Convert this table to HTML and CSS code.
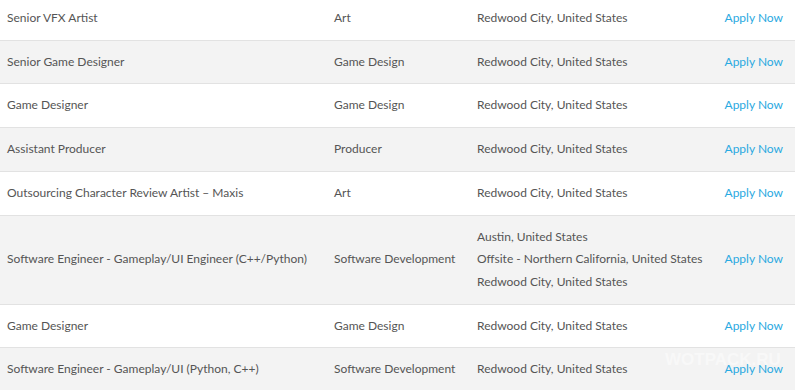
FILE: index.html
```html
<!DOCTYPE html>
<html>
<head>
<meta charset="utf-8">
<link rel="stylesheet" href="styles.css">
</head>
<body>
<div class="jobs">
  <div class="row">
    <div class="title">Senior VFX Artist</div>
    <div class="cat">Art</div>
    <div class="loc"><span>Redwood City, United States</span></div>
    <a class="apply">Apply Now</a>
  </div>
  <div class="row alt">
    <div class="title">Senior Game Designer</div>
    <div class="cat">Game Design</div>
    <div class="loc"><span>Redwood City, United States</span></div>
    <a class="apply">Apply Now</a>
  </div>
  <div class="row">
    <div class="title">Game Designer</div>
    <div class="cat">Game Design</div>
    <div class="loc"><span>Redwood City, United States</span></div>
    <a class="apply">Apply Now</a>
  </div>
  <div class="row alt">
    <div class="title">Assistant Producer</div>
    <div class="cat">Producer</div>
    <div class="loc"><span>Redwood City, United States</span></div>
    <a class="apply">Apply Now</a>
  </div>
  <div class="row">
    <div class="title">Outsourcing Character Review Artist – Maxis</div>
    <div class="cat">Art</div>
    <div class="loc"><span>Redwood City, United States</span></div>
    <a class="apply">Apply Now</a>
  </div>
  <div class="row alt">
    <div class="title">Software Engineer - Gameplay/UI Engineer (C++/Python)</div>
    <div class="cat">Software Development</div>
    <div class="loc"><span>Austin, United States</span><span>Offsite - Northern California, United States</span><span>Redwood City, United States</span></div>
    <a class="apply">Apply Now</a>
  </div>
  <div class="row">
    <div class="title">Game Designer</div>
    <div class="cat">Game Design</div>
    <div class="loc"><span>Redwood City, United States</span></div>
    <a class="apply">Apply Now</a>
  </div>
  <div class="row alt">
    <div class="title">Software Engineer - Gameplay/UI (Python, C++)</div>
    <div class="cat">Software Development</div>
    <div class="loc"><span>Redwood City, United States</span></div>
    <a class="apply">Apply Now</a>
    <div class="watermark">WOTPACK.RU</div>
  </div>
</div>
</body>
</html>
```

FILE: styles.css
```css
html, body {
  margin: 0;
  padding: 0;
  background: #ffffff;
  overflow: hidden;
}
body {
  font-family: "Lato", "Liberation Sans", sans-serif;
  font-size: 12px;
  color: #555555;
}
.jobs {
  width: 795px;
  margin-top: -3px;
}
.row {
  position: relative;
  display: grid;
  grid-template-columns: 327px 143px 1fr auto;
  align-items: center;
  padding: 10px 11px 10px 7px;
  border-bottom: 1px solid #e2e2e2;
  background: #ffffff;
  white-space: nowrap;
}
.row.alt {
  background: #f3f3f3;
}
.title, .cat, .loc span, .apply {
  line-height: 22.7px;
}
.loc {
  display: flex;
  flex-direction: column;
}
.apply {
  color: #2aa9e1;
  text-align: right;
  margin-right: 1px;
}
.watermark {
  position: absolute;
  left: 665px;
  top: 2px;
  font-family: "Liberation Sans Narrow", "Liberation Sans", sans-serif;
  font-size: 17px;
  font-weight: bold;
  color: rgba(255, 255, 255, 0.45);
}
```
